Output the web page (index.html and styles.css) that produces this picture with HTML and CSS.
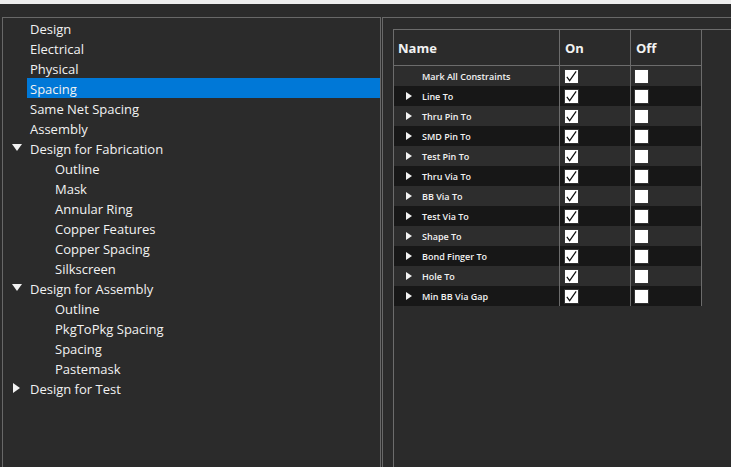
FILE: index.html
```html
<!DOCTYPE html>
<html>
<head>
<meta charset="utf-8">
<link rel="stylesheet" href="styles.css">
</head>
<body>
<div class="topband"></div>
<div class="main">
  <div class="tree">
    <div class="node l1">Design</div>
    <div class="node l1">Electrical</div>
    <div class="node l1">Physical</div>
    <div class="node sel"><span class="hl">Spacing</span></div>
    <div class="node l1">Same Net Spacing</div>
    <div class="node l1">Assembly</div>
    <div class="node l1"><span class="tri-down"></span>Design for Fabrication</div>
    <div class="node l2">Outline</div>
    <div class="node l2">Mask</div>
    <div class="node l2">Annular Ring</div>
    <div class="node l2">Copper Features</div>
    <div class="node l2">Copper Spacing</div>
    <div class="node l2">Silkscreen</div>
    <div class="node l1"><span class="tri-down"></span>Design for Assembly</div>
    <div class="node l2">Outline</div>
    <div class="node l2">PkgToPkg Spacing</div>
    <div class="node l2">Spacing</div>
    <div class="node l2">Pastemask</div>
    <div class="node l1"><span class="tri-right"></span>Design for Test</div>
  </div>
  <div class="pane">
    <div class="grid">
      <div class="hdr">
        <div class="c name">Name</div>
        <div class="c on">On</div>
        <div class="c off">Off</div>
      </div>
      <div class="row light"><div class="c name">Mark All Constraints</div><div class="c on"><span class="cb"><svg viewBox="0 0 14 14"><polyline points="2,7.5 5,11.5 12,1.5"/></svg></span></div><div class="c off"><span class="cb"></span></div></div>
      <div class="row dark"><div class="c name"><span class="arr"></span>Line To</div><div class="c on"><span class="cb"><svg viewBox="0 0 14 14"><polyline points="2,7.5 5,11.5 12,1.5"/></svg></span></div><div class="c off"><span class="cb"></span></div></div>
      <div class="row light"><div class="c name"><span class="arr"></span>Thru Pin To</div><div class="c on"><span class="cb"><svg viewBox="0 0 14 14"><polyline points="2,7.5 5,11.5 12,1.5"/></svg></span></div><div class="c off"><span class="cb"></span></div></div>
      <div class="row dark"><div class="c name"><span class="arr"></span>SMD Pin To</div><div class="c on"><span class="cb"><svg viewBox="0 0 14 14"><polyline points="2,7.5 5,11.5 12,1.5"/></svg></span></div><div class="c off"><span class="cb"></span></div></div>
      <div class="row light"><div class="c name"><span class="arr"></span>Test Pin To</div><div class="c on"><span class="cb"><svg viewBox="0 0 14 14"><polyline points="2,7.5 5,11.5 12,1.5"/></svg></span></div><div class="c off"><span class="cb"></span></div></div>
      <div class="row dark"><div class="c name"><span class="arr"></span>Thru Via To</div><div class="c on"><span class="cb"><svg viewBox="0 0 14 14"><polyline points="2,7.5 5,11.5 12,1.5"/></svg></span></div><div class="c off"><span class="cb"></span></div></div>
      <div class="row light"><div class="c name"><span class="arr"></span>BB Via To</div><div class="c on"><span class="cb"><svg viewBox="0 0 14 14"><polyline points="2,7.5 5,11.5 12,1.5"/></svg></span></div><div class="c off"><span class="cb"></span></div></div>
      <div class="row dark"><div class="c name"><span class="arr"></span>Test Via To</div><div class="c on"><span class="cb"><svg viewBox="0 0 14 14"><polyline points="2,7.5 5,11.5 12,1.5"/></svg></span></div><div class="c off"><span class="cb"></span></div></div>
      <div class="row light"><div class="c name"><span class="arr"></span>Shape To</div><div class="c on"><span class="cb"><svg viewBox="0 0 14 14"><polyline points="2,7.5 5,11.5 12,1.5"/></svg></span></div><div class="c off"><span class="cb"></span></div></div>
      <div class="row dark"><div class="c name"><span class="arr"></span>Bond Finger To</div><div class="c on"><span class="cb"><svg viewBox="0 0 14 14"><polyline points="2,7.5 5,11.5 12,1.5"/></svg></span></div><div class="c off"><span class="cb"></span></div></div>
      <div class="row light"><div class="c name"><span class="arr"></span>Hole To</div><div class="c on"><span class="cb"><svg viewBox="0 0 14 14"><polyline points="2,7.5 5,11.5 12,1.5"/></svg></span></div><div class="c off"><span class="cb"></span></div></div>
      <div class="row dark"><div class="c name"><span class="arr"></span>Min BB Via Gap</div><div class="c on"><span class="cb"><svg viewBox="0 0 14 14"><polyline points="2,7.5 5,11.5 12,1.5"/></svg></span></div><div class="c off"><span class="cb"></span></div></div>
    </div>
  </div>
</div>
</body>
</html>
```

FILE: styles.css
```css
* { box-sizing: border-box; }
html, body {
  margin: 0;
  padding: 0;
  width: 731px;
  height: 467px;
  overflow: hidden;
  background: #2b2b2b;
  font-family: "Open Sans", "Noto Sans", sans-serif;
  color: #f2f2f2;
}
.topband {
  height: 4px;
  background: #ededed;
}
.main {
  display: flex;
  margin-top: 13px;
  height: 450px;
}
.tree {
  margin-left: 2px;
  width: 379px;
  border: 1px solid #686868;
  border-bottom: none;
  flex: none;
}
.node {
  position: relative;
  height: 20px;
  line-height: 22px;
  font-size: 13px;
  white-space: nowrap;
}
.node.l1 { padding-left: 27px; }
.node.l2 { padding-left: 52px; }
.node.sel { padding-left: 24px; }
.hl {
  display: block;
  background: #0078d7;
  padding-left: 3px;
  height: 20px;
}
.tri-down {
  position: absolute;
  left: 9px;
  top: 6px;
  width: 0;
  height: 0;
  border-top: 7px solid #f2f2f2;
  border-left: 5px solid transparent;
  border-right: 5px solid transparent;
}
.tri-right {
  position: absolute;
  left: 10px;
  top: 5px;
  width: 0;
  height: 0;
  border-left: 7px solid #f2f2f2;
  border-top: 5px solid transparent;
  border-bottom: 5px solid transparent;
}
.pane {
  flex: 1;
  margin-left: 1px;
  border-left: 1px solid #686868;
  border-top: 1px solid #686868;
  padding: 11px 0 0 10px;
}
.grid {
  height: 100%;
  border-left: 1px solid #6c6c6c;
  border-top: 1px solid #6c6c6c;
}
.hdr, .row {
  display: flex;
  width: 308px;
}
.hdr { height: 36px; }
.row { height: 20px; }
.c {
  border-right: 1px solid #6c6c6c;
  display: flex;
  align-items: center;
  flex: none;
}
.hdr .c {
  border-bottom: 1px solid #6c6c6c;
  font-size: 13px;
  font-weight: 700;
  padding-top: 1px;
}
.c.name { width: 166px; }
.c.on { width: 71px; }
.c.off { width: 71px; }
.hdr .name { padding-left: 4px; }
.hdr .on { padding-left: 5px; }
.hdr .off { padding-left: 5px; }
.row.light { background: #2d2d2d; }
.row.dark { background: #171717; }
.row .name {
  position: relative;
  padding-left: 28px;
  font-size: 9px;
  font-weight: 600;
  white-space: nowrap;
}
.arr {
  position: absolute;
  left: 12px;
  top: 6px;
  width: 0;
  height: 0;
  border-left: 6px solid #f2f2f2;
  border-top: 4px solid transparent;
  border-bottom: 4px solid transparent;
}
.row .on { padding-left: 4px; }
.row .off { padding-left: 3px; }
.cb {
  display: block;
  width: 15px;
  height: 15px;
  background: #ffffff;
  border: 1px solid #333;
}
.cb svg {
  display: block;
  width: 13px;
  height: 13px;
}
.cb polyline {
  fill: none;
  stroke: #111;
  stroke-width: 1.3;
}
```
